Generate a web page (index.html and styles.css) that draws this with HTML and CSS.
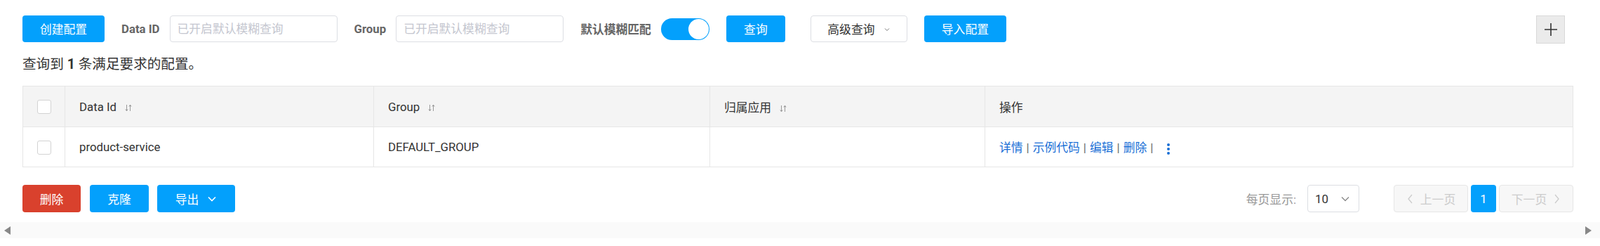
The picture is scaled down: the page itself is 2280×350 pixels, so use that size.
FILE: index.html
```html
<!DOCTYPE html>
<html lang="zh-CN">
<head>
    <meta charset="UTF-8">
    <title>配置列表</title>
    <link rel="stylesheet" href="styles.css">
</head>
<body>

<div class="page">
    <div class="toolbar">
        <button class="btn btn-primary btn-create">创建配置</button>
        <label class="field-label">Data ID</label>
        <input class="field-input" type="text" placeholder="已开启默认模糊查询">
        <label class="field-label">Group</label>
        <input class="field-input" type="text" placeholder="已开启默认模糊查询">
        <label class="field-label">默认模糊匹配</label>
        <span class="switch"><span class="switch-knob"></span></span>
        <button class="btn btn-primary btn-query">查询</button>
        <button class="btn btn-normal btn-advanced">高级查询
            <svg class="caret-small" width="8" height="6" viewBox="0 0 8 6"><path d="M1 1.5 L4 4.5 L7 1.5" fill="none" stroke="#777" stroke-width="1"/></svg>
        </button>
        <button class="btn btn-primary btn-import">导入配置</button>
        <span class="spacer"></span>
        <button class="btn-plus">
            <svg width="20" height="20" viewBox="0 0 20 20"><path d="M10 1 V19 M1 10 H19" stroke="#333" stroke-width="1.6"/></svg>
        </button>
    </div>

    <div class="result-count">查询到 <b>1</b> 条满足要求的配置。</div>

    <table class="config-table">
        <colgroup>
            <col style="width:60px">
            <col style="width:440px">
            <col style="width:479px">
            <col style="width:392px">
            <col>
        </colgroup>
        <thead>
            <tr>
                <th class="cell-check"><span class="checkbox"></span></th>
                <th>Data Id <svg class="sort-icon" width="10" height="11" viewBox="0 0 10 11"><path d="M2.5 1 V9.5 M0.8 7.5 L2.5 9.8 L4.2 7.5 M7.5 10 V1.5 M5.8 3.5 L7.5 1.2 L9.2 3.5" fill="none" stroke="#999" stroke-width="1"/></svg></th>
                <th>Group <svg class="sort-icon" width="10" height="11" viewBox="0 0 10 11"><path d="M2.5 1 V9.5 M0.8 7.5 L2.5 9.8 L4.2 7.5 M7.5 10 V1.5 M5.8 3.5 L7.5 1.2 L9.2 3.5" fill="none" stroke="#999" stroke-width="1"/></svg></th>
                <th>归属应用 <svg class="sort-icon" width="10" height="11" viewBox="0 0 10 11"><path d="M2.5 1 V9.5 M0.8 7.5 L2.5 9.8 L4.2 7.5 M7.5 10 V1.5 M5.8 3.5 L7.5 1.2 L9.2 3.5" fill="none" stroke="#999" stroke-width="1"/></svg></th>
                <th>操作</th>
            </tr>
        </thead>
        <tbody>
            <tr>
                <td class="cell-check"><span class="checkbox"></span></td>
                <td>product-service</td>
                <td>DEFAULT_GROUP</td>
                <td></td>
                <td class="actions">
                    <a href="#">详情</a><span class="sep">|</span><a href="#">示例代码</a><span class="sep">|</span><a href="#">编辑</a><span class="sep">|</span><a href="#">删除</a><span class="sep">|</span>
                    <svg class="more-icon" width="6" height="18" viewBox="0 0 6 18"><circle cx="3" cy="3" r="2" fill="#1a6fd6"/><circle cx="3" cy="9" r="2" fill="#1a6fd6"/><circle cx="3" cy="15" r="2" fill="#1a6fd6"/></svg>
                </td>
            </tr>
        </tbody>
    </table>

    <div class="footer">
        <button class="btn btn-danger btn-delete">删除</button>
        <button class="btn btn-primary btn-clone">克隆</button>
        <button class="btn btn-primary btn-export">导出
            <svg class="caret" width="14" height="10" viewBox="0 0 14 10"><path d="M2 2.5 L7 7.5 L12 2.5" fill="none" stroke="#fff" stroke-width="1.6"/></svg>
        </button>
        <span class="spacer"></span>
        <span class="page-size-label">每页显示:</span>
        <span class="page-size">10
            <svg width="14" height="10" viewBox="0 0 14 10"><path d="M2 2.5 L7 7.5 L12 2.5" fill="none" stroke="#888" stroke-width="1.3"/></svg>
        </span>
        <div class="pager">
            <span class="pager-btn pager-prev">
                <svg width="10" height="16" viewBox="0 0 10 16"><path d="M8 2 L3 8 L8 14" fill="none" stroke="#ccc" stroke-width="1.3"/></svg>
                上一页
            </span>
            <span class="pager-num">1</span>
            <span class="pager-btn pager-next">
                下一页
                <svg width="10" height="16" viewBox="0 0 10 16"><path d="M2 2 L7 8 L2 14" fill="none" stroke="#ccc" stroke-width="1.3"/></svg>
            </span>
        </div>
    </div>
</div>

<div class="hscroll">
    <span class="arrow-left"></span>
    <span class="arrow-right"></span>
</div>

</body>
</html>
```

FILE: styles.css
```css
body {
    margin: 0;
    background-color: #fff;
    font-family: Roboto, "Noto Sans CJK SC", sans-serif;
    font-size: 16.8px;
    color: #333;
    width: 2280px;
    height: 350px;
    overflow: hidden;
}

.page {
    padding: 22px 38px 0 32px;
}

.toolbar {
    display: flex;
    align-items: center;
    height: 38px;
}

.spacer {
    flex: 1;
}

.btn {
    height: 38px;
    border-radius: 4px;
    border: 1px solid transparent;
    font-family: Roboto, "Noto Sans CJK SC", sans-serif;
    font-size: 16.8px;
    padding: 0;
    cursor: pointer;
    box-sizing: border-box;
    display: inline-flex;
    align-items: center;
    justify-content: center;
}

.btn-primary {
    background-color: #03a0fc;
    color: #fff;
}

.btn-danger {
    background-color: #d9412d;
    color: #fff;
}

.btn-normal {
    background-color: #fff;
    color: #333;
    border-color: #dcdee3;
}

.btn-create { width: 117px; margin-right: 24px; }
.btn-query { width: 84px; margin-right: 36px; }
.btn-advanced { width: 138px; margin-right: 24px; }
.btn-import { width: 117px; }

.caret-small {
    margin-left: 14px;
    margin-top: 2px;
}

.field-label {
    font-weight: bold;
    color: #666;
    margin-right: 14px;
}

.field-input {
    width: 239px;
    height: 38px;
    box-sizing: border-box;
    border: 1px solid #dcdee3;
    border-radius: 4px;
    padding: 0 10px;
    font-family: Roboto, "Noto Sans CJK SC", sans-serif;
    font-size: 16.8px;
    margin-right: 24px;
}

.field-input::placeholder {
    color: #c4c6cf;
}

.switch {
    width: 69px;
    height: 31px;
    border-radius: 16px;
    background-color: #03a0fc;
    display: inline-flex;
    justify-content: flex-end;
    align-items: center;
    padding: 0 1px;
    box-sizing: border-box;
    margin-right: 24px;
}

.switch-knob {
    width: 29px;
    height: 29px;
    border-radius: 50%;
    background-color: #fff;
}

.btn-plus {
    width: 41px;
    height: 40px;
    margin-right: 12px;
    margin-top: 2px;
    background-color: #ebebeb;
    border: 1px solid #d9d9d9;
    display: inline-flex;
    align-items: center;
    justify-content: center;
    padding: 0;
}

.result-count {
    font-size: 19.6px;
    margin-top: 21px;
    height: 22px;
    line-height: 22px;
    color: #333;
}

.config-table {
    width: 2210px;
    margin-top: 19px;
    border-collapse: collapse;
    table-layout: fixed;
    border: 1px solid #e6e6e6;
}

.config-table th,
.config-table td {
    text-align: left;
    padding: 0 0 0 20px;
    border: 1px solid #e6e6e6;
    font-weight: normal;
    white-space: nowrap;
}

.config-table th {
    background-color: #f4f4f4;
    height: 57px;
}

.config-table td {
    height: 56px;
}

.config-table .cell-check {
    padding-left: 20px;
}

.checkbox {
    display: inline-block;
    width: 18px;
    height: 18px;
    border: 1px solid #d3d3d3;
    border-radius: 3px;
    background-color: #fff;
    vertical-align: middle;
}

.sort-icon {
    margin-left: 8px;
    vertical-align: middle;
}

.actions a {
    color: #1a6fd6;
    text-decoration: none;
}

.sep {
    color: #666;
    margin: 0 5px;
}

.more-icon {
    margin-left: 10px;
    vertical-align: middle;
}

.footer {
    display: flex;
    align-items: center;
    margin-top: 25px;
    height: 39px;
}

.btn-delete { width: 83px; margin-right: 13px; height: 39px; }
.btn-clone { width: 84px; margin-right: 12px; height: 39px; }
.btn-export { width: 111px; height: 39px; }

.btn-export .caret {
    margin-left: 12px;
}

.page-size-label {
    color: #999;
    margin-right: 16px;
}

.page-size {
    width: 74px;
    height: 39px;
    box-sizing: border-box;
    border: 1px solid #dcdee3;
    border-radius: 4px;
    display: inline-flex;
    align-items: center;
    justify-content: space-between;
    padding: 0 12px 0 10px;
    color: #333;
    margin-right: 49px;
}

.pager {
    display: flex;
    gap: 4px;
}

.pager-btn {
    width: 106px;
    height: 39px;
    box-sizing: border-box;
    border: 1px solid #e6e6e6;
    border-radius: 4px;
    background-color: #f7f7f7;
    color: #ccc;
    display: inline-flex;
    align-items: center;
    justify-content: center;
    gap: 10px;
}

.pager-num {
    width: 36px;
    height: 39px;
    border-radius: 4px;
    background-color: #03a0fc;
    color: #fff;
    display: inline-flex;
    align-items: center;
    justify-content: center;
}

.hscroll {
    position: relative;
    margin-top: 14px;
    height: 23px;
    background-color: #fafafa;
}

.arrow-left,
.arrow-right {
    position: absolute;
    top: 6px;
    width: 0;
    height: 0;
    border-top: 6px solid transparent;
    border-bottom: 6px solid transparent;
}

.arrow-left {
    left: 6px;
    border-right: 9px solid #888;
}

.arrow-right {
    right: 12px;
    border-left: 9px solid #888;
}
```
